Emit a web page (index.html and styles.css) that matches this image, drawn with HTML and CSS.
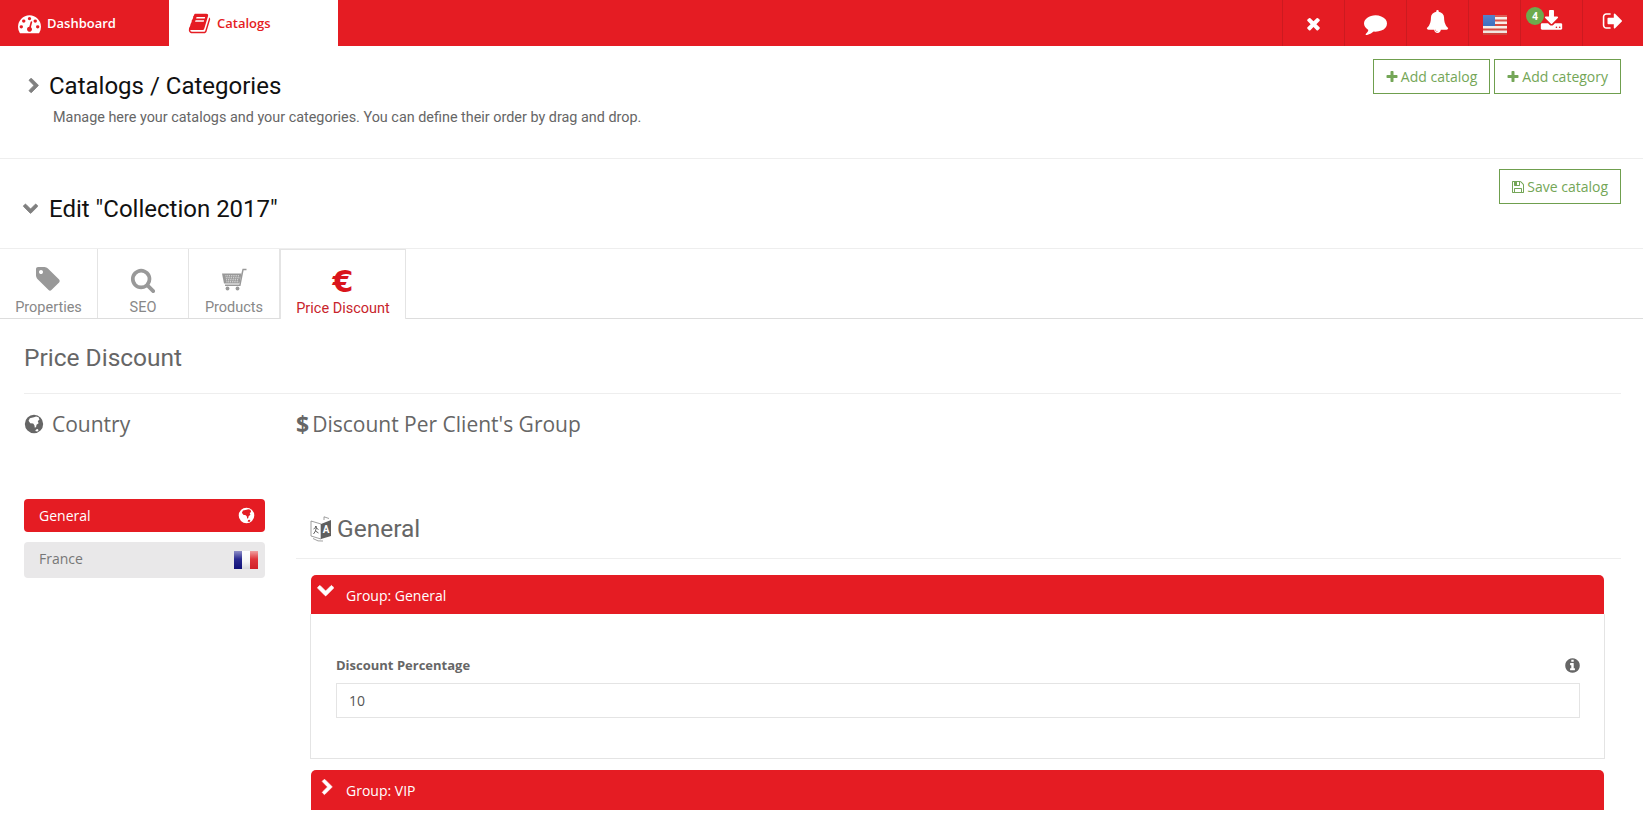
FILE: index.html

```html
<!DOCTYPE html>
<html>
<head>
  <meta charset="UTF-8">
  <title>Catalogs / Categories</title>
  <meta name="viewport" content="width=device-width, initial-scale=1.0">
  <link rel="stylesheet" href="styles.css">
</head>
<body>
  <svg class="defs" width="0" height="0">
    <symbol id="i-dashboard" viewBox="0 0 1792 1792"><path d="M384 1152q0-53-37.5-90.5t-90.5-37.5-90.5 37.5-37.5 90.5 37.5 90.5 90.5 37.5 90.5-37.5 37.5-90.5zm192-448q0-53-37.5-90.5t-90.5-37.5-90.5 37.5-37.5 90.5 37.5 90.5 90.5 37.5 90.5-37.5 37.5-90.5zm428 481l101-382q6-26-7.5-48.5t-38.5-29.5-48 6.5-30 39.5l-101 382q-60 5-107 43.5t-63 98.5q-20 77 20 146t117 89 146-20 89-117q16-60-6-117t-72-91zm660-33q0-53-37.5-90.5t-90.5-37.5-90.5 37.5-37.5 90.5 37.5 90.5 90.5 37.5 90.5-37.5 37.5-90.5zm-640-640q0-53-37.5-90.5t-90.5-37.5-90.5 37.5-37.5 90.5 37.5 90.5 90.5 37.5 90.5-37.5 37.5-90.5zm448 192q0-53-37.5-90.5t-90.5-37.5-90.5 37.5-37.5 90.5 37.5 90.5 90.5 37.5 90.5-37.5 37.5-90.5zm320 448q0 261-141 483-19 29-54 29h-1402q-35 0-54-29-141-221-141-483 0-182 71-348t191-286 286-191 348-71 348 71 286 191 191 286 71 348z"/></symbol>
    <symbol id="i-book" viewBox="0 0 1792 1792"><path d="M1703 478q40 57 18 129l-275 906q-19 64-76.5 107.5t-122.5 43.5h-923q-77 0-148.5-53.5t-99.5-131.5q-24-67-2-127 0-4 3-27t4-37q1-8-3-21.5t-3-19.5q2-11 8-21t16.5-23.5 16.5-23.5q23-38 45-91.5t30-91.5q3-10 .5-30t-.5-28q3-11 17-28t17-23q21-36 42-92t25-90q1-9-2.5-32t.5-28q4-13 22-30.5t22-22.5q19-26 42.5-84.5t27.5-96.5q1-8-3-25.5t-2-26.5q2-8 9-18t18-23 17-21q8-12 16.5-30.5t15-35 16-36 19.5-32 26.5-23.5 36-11.5 47.5 5.5l-1 3q38-9 51-9h761q74 0 114 56t18 130l-274 906q-36 119-71.5 153.5t-128.5 34.5h-869q-27 0-38 15-11 16-1 43 24 70 144 70h923q29 0 56-15.5t35-41.5l300-987q7-22 5-57 38 15 59 43zm-1064 2q-4 13 2 22.5t20 9.5h608q13 0 25.5-9.5t16.5-22.5l21-64q4-13-2-22.5t-20-9.5h-608q-13 0-25.5 9.5t-16.5 22.5zm-83 256q-4 13 2 22.5t20 9.5h608q13 0 25.5-9.5t16.5-22.5l21-64q4-13-2-22.5t-20-9.5h-608q-13 0-25.5 9.5t-16.5 22.5z"/></symbol>
    <symbol id="i-right" viewBox="0 0 1792 1792"><path d="M1363 877l-742 742q-19 19-45 19t-45-19l-166-166q-19-19-19-45t19-45l531-531-531-531q-19-19-19-45t19-45l166-166q19-19 45-19t45 19l742 742q19 19 19 45t-19 45z"/></symbol>
    <symbol id="i-down" viewBox="0 0 1792 1792"><path transform="rotate(90 896 896)" d="M1363 877l-742 742q-19 19-45 19t-45-19l-166-166q-19-19-19-45t19-45l531-531-531-531q-19-19-19-45t19-45l166-166q19-19 45-19t45 19l742 742q19 19 19 45t-19 45z"/></symbol>
    <symbol id="i-times" viewBox="0 0 1792 1792"><path d="M1490 1322q0 40-28 68l-136 136q-28 28-68 28t-68-28l-294-294-294 294q-28 28-68 28t-68-28l-136-136q-28-28-28-68t28-68l294-294-294-294q-28-28-28-68t28-68l136-136q28-28 68-28t68 28l294 294 294-294q28-28 68-28t68 28l136 136q28 28 28 68t-28 68l-294 294 294 294q28 28 28 68z"/></symbol>
    <symbol id="i-comment" viewBox="0 0 1792 1792"><path d="M1792 896q0 174-120 321.5t-326 233-450 85.5q-70 0-145-8-198 175-460 242-49 14-114 22-17 2-30.5-9t-17.5-29v-1q-3-4-.5-12t2-10 4.5-9.5l6-9 7-8.5 8-9q7-8 31-34.5t34.5-38 31-39.5 32.5-51 27-59 26-76q-157-89-247.5-220t-90.5-281q0-130 71-248.5t191-204.5 286-136.5 348-50.5q244 0 450 85.5t326 233 120 321.5z"/></symbol>
    <symbol id="i-bell" viewBox="0 0 1792 1792"><path d="M912 1696q0-16-16-16-59 0-101.5-42.5t-42.5-101.5q0-16-16-16t-16 16q0 73 51.5 124.5t124.5 51.5q16 0 16-16zm816-288q0 52-38 90t-90 38h-448q0 106-75 181t-181 75-181-75-75-181h-448q-52 0-90-38t-38-90q50-42 91-88t85-119.5 74.5-158.5 50-206 19.5-260q0-152 117-282.5t307-158.5q-8-19-8-39 0-40 28-68t68-28 68 28 28 68q0 20-8 39 190 28 307 158.5t117 282.5q0 139 19.5 260t50 206 74.5 158.5 85 119.5 91 88z"/></symbol>
    <symbol id="i-download" viewBox="0 0 1792 1792"><path d="M1344 1344q0-26-19-45t-45-19-45 19-19 45 19 45 45 19 45-19 19-45zm256 0q0-26-19-45t-45-19-45 19-19 45 19 45 45 19 45-19 19-45zm128-224v320q0 40-28 68t-68 28h-1472q-40 0-68-28t-28-68v-320q0-40 28-68t68-28h465l135 136q58 56 136 56t136-56l136-136h464q40 0 68 28t28 68zm-325-569q17 41-14 70l-448 448q-18 19-45 19t-45-19l-448-448q-31-29-14-70 17-39 59-39h256v-448q0-26 19-45t45-19h256q26 0 45 19t19 45v448h256q42 0 59 39z"/></symbol>
    <symbol id="i-signout" viewBox="0 0 1792 1792"><path d="M704 1440q0 4 1 20t.5 26.5-3 23.5-10 19.5-20.5 6.5h-320q-119 0-203.5-84.5t-84.5-203.5v-704q0-119 84.5-203.5t203.5-84.5h320q13 0 22.5 9.5t9.5 22.5q0 4 1 20t.5 26.5-3 23.5-10 19.5-20.5 6.5h-320q-66 0-113 47t-47 113v704q0 66 47 113t113 47h312l11.5 1 11.5 3 8 5.5 7 9 2 13.5zm928-544q0 26-19 45l-544 544q-19 19-45 19t-45-19-19-45v-288h-448q-26 0-45-19t-19-45v-384q0-26 19-45t45-19h448v-288q0-26 19-45t45-19 45 19l544 544q19 19 19 45z"/></symbol>
    <symbol id="i-plus" viewBox="0 0 1792 1792"><path d="M1600 736v192q0 40-28 68t-68 28h-416v416q0 40-28 68t-68 28h-192q-40 0-68-28t-28-68v-416h-416q-40 0-68-28t-28-68v-192q0-40 28-68t68-28h416v-416q0-40 28-68t68-28h192q40 0 68 28t28 68v416h416q40 0 68 28t28 68z"/></symbol>
    <symbol id="i-save" viewBox="0 0 1792 1792"><path d="M512 1536h768v-384h-768v384zm896 0h128v-896q0-14-10-38.5t-20-34.5l-281-281q-10-10-34-20t-39-10v416q0 40-28 68t-68 28h-576q-40 0-68-28t-28-68v-416h-128v1280h128v-416q0-40 28-68t68-28h832q40 0 68 28t28 68v416zm-384-928v-320q0-13-9.5-22.5t-22.5-9.5h-192q-13 0-22.5 9.5t-9.5 22.5v320q0 13 9.5 22.5t22.5 9.5h192q13 0 22.5-9.5t9.5-22.5zm640 32v928q0 40-28 68t-68 28h-1344q-40 0-68-28t-28-68v-1344q0-40 28-68t68-28h928q40 0 88 20t76 48l280 280q28 28 48 76t20 88z"/></symbol>
    <symbol id="i-tag" viewBox="0 0 1792 1792"><path d="M576 448q0-53-37.5-90.5t-90.5-37.5-90.5 37.5-37.5 90.5 37.5 90.5 90.5 37.5 90.5-37.5 37.5-90.5zm1067 576q0 53-37 90l-491 492q-39 37-91 37-53 0-90-37l-715-716q-38-37-64.5-101t-26.5-117v-416q0-52 38-90t90-38h416q53 0 117 26.5t102 64.5l715 714q37 39 37 91z"/></symbol>
    <symbol id="i-search" viewBox="0 0 1792 1792"><path d="M1216 832q0-185-131.5-316.5t-316.5-131.5-316.5 131.5-131.5 316.5 131.5 316.5 316.5 131.5 316.5-131.5 131.5-316.5zm512 832q0 52-38 90t-90 38q-54 0-90-38l-343-342q-179 124-399 124-143 0-273.5-55.5t-225-150-150-225-55.5-273.5 55.5-273.5 150-225 225-150 273.5-55.5 273.5 55.5 225 150 150 225 55.5 273.5q0 220-124 399l343 343q37 37 37 90z"/></symbol>
    <symbol id="i-info" viewBox="0 0 1792 1792"><path d="M1152 1376v-160q0-14-9-23t-23-9h-96v-512q0-14-9-23t-23-9h-320q-14 0-23 9t-9 23v160q0 14 9 23t23 9h96v320h-96q-14 0-23 9t-9 23v160q0 14 9 23t23 9h448q14 0 23-9t9-23zm-128-896v-160q0-14-9-23t-23-9h-192q-14 0-23 9t-9 23v160q0 14 9 23t23 9h192q14 0 23-9t9-23zm640 416q0 209-103 385.5t-279.5 279.5-385.5 103-385.5-103-279.5-279.5-103-385.5 103-385.5 279.5-279.5 385.5-103 385.5 103 279.5 279.5 103 385.5z"/></symbol>
    <symbol id="i-globe" viewBox="0 0 24 24"><path fill-rule="evenodd" d="M12 1a11 11 0 1 1 0 22 11 11 0 0 1 0-22zM7 5 5.500 8l2 3 3.500.5 1.500 2 .5 3 1.500-1 .5-2.500 2.500-2-1-2.500 2-1.500-1-3-3-1-2.500 1zM14.500 18.500l-1 2 2.500.5 1.500-1.500-1-1.500z"/></symbol>
  </svg>

  <header class="topbar">
    <a class="main-tab">
      <svg class="main-tab-icon"><use href="#i-dashboard"/></svg>Dashboard
    </a>
    <a class="main-tab active">
      <svg class="main-tab-icon"><use href="#i-book"/></svg>Catalogs
    </a>
    <div class="top-actions">
      <a class="top-action"><svg class="ic-x"><use href="#i-times"/></svg></a>
      <a class="top-action"><svg class="ic-top"><use href="#i-comment"/></svg></a>
      <a class="top-action"><svg class="ic-top raised"><use href="#i-bell"/></svg></a>
      <a class="top-action narrow">
        <svg class="flag-us" viewBox="0 0 24 20">
          <defs>
            <linearGradient id="gloss" x1="0" y1="0" x2="0" y2="1">
              <stop offset="0" stop-color="#fff" stop-opacity=".12"/>
              <stop offset=".5" stop-color="#fff" stop-opacity="0"/>
              <stop offset="1" stop-color="#000" stop-opacity=".06"/>
            </linearGradient>
          </defs>
          <rect width="24" height="20" fill="#f8efe9"/>
          <rect y="0" width="24" height="2" fill="#d9483f"/>
          <rect y="4.500" width="24" height="2" fill="#d9483f"/>
          <rect y="9" width="24" height="2" fill="#d9483f"/>
          <rect y="13.500" width="24" height="2" fill="#d9483f"/>
          <rect y="18" width="24" height="2" fill="#d9483f"/>
          <rect width="12" height="11" fill="#4070c0"/>
          <rect width="24" height="20" fill="url(#gloss)"/>
        </svg>
      </a>
      <a class="top-action">
        <span class="badge">4</span>
        <svg class="ic-top raised"><use href="#i-download"/></svg>
      </a>
      <a class="top-action last"><svg class="ic-top raised small"><use href="#i-signout"/></svg></a>
    </div>
  </header>

  <section class="head-block first">
    <div class="head-text">
      <h1 class="head-title"><svg class="head-arrow"><use href="#i-right"/></svg>Catalogs / Categories</h1>
      <p class="head-sub">Manage here your catalogs and your categories. You can define their order by drag and drop.</p>
    </div>
    <div class="head-buttons">
      <a class="btn-outline"><svg class="btn-icon"><use href="#i-plus"/></svg>Add catalog</a>
      <a class="btn-outline"><svg class="btn-icon"><use href="#i-plus"/></svg>Add category</a>
    </div>
  </section>

  <section class="head-block second">
    <h1 class="head-title"><svg class="head-arrow"><use href="#i-down"/></svg>Edit "Collection 2017"</h1>
    <div class="head-buttons">
      <a class="btn-outline"><svg class="btn-icon"><use href="#i-save"/></svg>Save catalog</a>
    </div>
  </section>

  <nav class="tabs">
    <a class="tab t1"><svg class="tab-icon tag"><use href="#i-tag"/></svg>Properties</a>
    <a class="tab t2"><svg class="tab-icon search"><use href="#i-search"/></svg>SEO</a>
    <a class="tab t3">
      <svg class="tab-icon cart" viewBox="0 0 26 24">
        <path d="M1 5.500h19.500L18.500 15.500H3z"/>
        <path d="M20.500 5 21.500 .8H25.500v1.400h-2.900L19.500 18H4v-1.400h14.300z"/>
        <circle cx="6.500" cy="20.500" r="1.900"/><circle cx="16.500" cy="20.500" r="1.900"/>
        <path class="cart-grid" d="M4.500 7.800h14M4.800 9.800h13.500M5.200 11.800h12.700M5.500 13.800h12"/>
      </svg>Products
    </a>
    <a class="tab t4 active"><span class="euro">€</span>Price Discount</a>
  </nav>

  <main class="content">
    <h2 class="section-title">Price Discount</h2>
    <div class="columns-head">
      <h3 class="col-title country"><svg class="globe-big"><use href="#i-globe"/></svg>Country</h3>
      <h3 class="col-title"><span class="dollar">$</span>Discount Per Client's Group</h3>
    </div>
    <div class="columns">
      <aside class="countries">
        <a class="country-item active">General<svg class="globe-small"><use href="#i-globe"/></svg></a>
        <a class="country-item">France
          <svg class="flag-fr" viewBox="0 0 24 18">
            <defs>
              <linearGradient id="fr-blue" x1="0" y1="0" x2="0" y2="1"><stop offset="0" stop-color="#8f8fc8"/><stop offset=".45" stop-color="#2a2a90"/><stop offset="1" stop-color="#101078"/></linearGradient>
              <linearGradient id="fr-white" x1="0" y1="0" x2="0" y2="1"><stop offset="0" stop-color="#fff"/><stop offset=".6" stop-color="#f6f6f6"/><stop offset="1" stop-color="#d8d8dc"/></linearGradient>
              <linearGradient id="fr-red" x1="0" y1="0" x2="0" y2="1"><stop offset="0" stop-color="#f0a0a0"/><stop offset=".45" stop-color="#e0343a"/><stop offset="1" stop-color="#d02028"/></linearGradient>
            </defs>
            <rect width="8" height="18" fill="url(#fr-blue)"/>
            <rect x="8" width="8" height="18" fill="url(#fr-white)"/>
            <rect x="16" width="8" height="18" fill="url(#fr-red)"/>
          </svg>
        </a>
      </aside>
      <div class="groups">
        <div class="lang-head">
          <svg class="lang-icon" viewBox="0 0 22 26">
            <path class="lang-back" d="M1 5 11 8v15L1 20z"/>
            <path class="lang-front" d="M11 8 21 4v16l-10 3z"/>
            <path class="lang-back" d="M14 4V.8l5 1.700M3 22.500q5 3.500 10 2.500"/>
            <path class="lang-run" d="M5 10.500h1.500M6.500 10.500 5.500 15M3.500 13l2-1.500 3 2M5.500 15l-2 3M5.500 15l3 2"/>
            <text class="lang-a" x="16" y="17" text-anchor="middle">A</text>
          </svg>General
        </div>
        <div class="group">
          <div class="group-bar"><svg class="group-arrow"><use href="#i-down"/></svg>Group: General</div>
          <div class="group-body">
            <div class="field-head">
              <label class="field-label">Discount Percentage</label>
              <svg class="info"><use href="#i-info"/></svg>
            </div>
            <input class="field-input" type="text" value="10">
          </div>
        </div>
        <div class="group">
          <div class="group-bar"><svg class="group-arrow closed"><use href="#i-right"/></svg>Group: VIP</div>
        </div>
      </div>
    </div>
  </main>
</body>
</html>
```

FILE: styles.css

```css
html, body {
  height: 838px;
  overflow: hidden;
}
body {
  margin: 0;
  font-family: "Open Sans", sans-serif;
  font-size: 14px;
  color: #666;
  background-color: #fff;
}
svg {
  fill: currentColor;
  display: block;
  flex: none;
}
.defs {
  position: absolute;
}
a {
  text-decoration: none;
}

.topbar {
  display: flex;
  height: 46px;
  background-color: #e51c23;
}
.main-tab {
  width: 169px;
  box-sizing: border-box;
  padding-left: 18px;
  display: flex;
  align-items: center;
  color: #fff;
  font-size: 13px;
  font-weight: 600;
}
.main-tab.active {
  background-color: #fff;
  color: #e51c23;
  padding-left: 19px;
}
.main-tab-icon {
  width: 23px;
  height: 23px;
  margin-right: 6px;
}
.top-actions {
  margin-left: auto;
  display: flex;
  color: #fff;
}
.top-action {
  position: relative;
  width: 62px;
  border-left: 1px solid #cc1a20;
  box-sizing: border-box;
  display: flex;
  align-items: center;
  justify-content: center;
}
.top-action.narrow {
  width: 52px;
}
.top-action.last {
  width: 61px;
}
.ic-x {
  width: 19px;
  height: 19px;
}
.ic-top {
  width: 23px;
  height: 23px;
}
.ic-top.raised {
  margin-bottom: 4px;
}
.ic-top.small {
  width: 22px;
  height: 22px;
}
.flag-us {
  width: 24px;
  height: 20px;
  margin-top: 4px;
}
.badge {
  position: absolute;
  left: 5px;
  top: 7px;
  width: 18px;
  height: 18px;
  border-radius: 50%;
  background-color: #6cab4d;
  color: #fff;
  font-size: 10px;
  font-weight: 700;
  line-height: 18px;
  text-align: center;
}

.head-block {
  display: flex;
  justify-content: space-between;
  border-bottom: 1px solid #eee;
  padding-right: 22px;
}
.head-block.first {
  height: 112px;
}
.head-block.second {
  height: 89px;
}
.head-text {
  padding-top: 25px;
}
.head-title {
  margin: 0;
  display: flex;
  align-items: center;
  padding-left: 26px;
  font-family: Roboto, sans-serif;
  font-size: 24px;
  font-weight: 400;
  line-height: 30px;
  color: #111;
}
.second .head-title {
  align-self: flex-start;
  margin-top: 35px;
  padding-left: 22px;
}
.head-arrow {
  width: 16px;
  height: 16px;
  margin-right: 7px;
  color: #808080;
  stroke: currentColor;
  stroke-width: 90;
}
.second .head-arrow {
  margin-right: 11px;
}
.head-sub {
  margin: 7px 0 0 53px;
  font-family: Roboto, sans-serif;
  font-size: 14.4px;
  line-height: 20px;
  color: #666;
}
.head-buttons {
  display: flex;
  gap: 4px;
  padding-top: 13px;
  align-items: flex-start;
}
.second .head-buttons {
  padding-top: 10px;
}
.btn-outline {
  display: flex;
  align-items: center;
  height: 35px;
  box-sizing: border-box;
  padding: 0 12px 0 11px;
  border: 1px solid #6f9f4e;
  color: #74a657;
  font-size: 14px;
}
.btn-icon {
  width: 14px;
  height: 14px;
  margin-right: 2px;
}

.tabs {
  display: flex;
  height: 70px;
  box-sizing: border-box;
  border-bottom: 1px solid #ddd;
}
.tab {
  display: flex;
  flex-direction: column;
  align-items: center;
  box-sizing: border-box;
  height: 69px;
  padding-top: 17px;
  border-right: 1px solid #e4e4e4;
  font-family: Roboto, sans-serif;
  font-size: 14.5px;
  line-height: 18px;
  color: #888;
}
.t1 { width: 98px; }
.t2 { width: 91px; }
.t3 { width: 91px; }
.t4 {
  width: 126px;
  height: 70px;
  background-color: #fff;
  border-top: 1px solid #e4e4e4;
  border-left: 1px solid #e4e4e4;
  margin-bottom: -1px;
}
.tab-icon {
  width: 28px;
  height: 28px;
  margin-bottom: 5px;
  color: #999;
}
.tab-icon.tag {
  margin: -1px 2px 6px 0;
}
.tab-icon.search {
  width: 26px;
  height: 26px;
  margin: 1px 0 6px;
}
.tab-icon.cart {
  width: 26px;
  height: 24px;
  margin: 2px 0 7px;
}
.cart-grid {
  fill: none;
  stroke: #fff;
  stroke-width: .9;
  stroke-dasharray: .9 .9;
}
.euro {
  font-family: "DejaVu Sans", sans-serif;
  font-size: 30px;
  font-weight: 700;
  line-height: 30px;
  margin-bottom: 3px;
  color: #d9151c;
}
.tab.active {
  color: #c8242b;
}

.content {
  padding: 0 22px 0 24px;
}
.section-title {
  margin: 0;
  height: 75px;
  box-sizing: border-box;
  padding-top: 24px;
  border-bottom: 1px solid #eee;
  font-family: Roboto, sans-serif;
  font-size: 24.5px;
  font-weight: 400;
  line-height: 30px;
  color: #666;
}
.columns-head {
  display: flex;
  padding-top: 15px;
  height: 105px;
  box-sizing: border-box;
}
.col-title {
  margin: 0;
  display: flex;
  align-items: center;
  height: 30px;
  font-size: 21px;
  font-weight: 400;
  color: #666;
}
.col-title.country {
  width: 272px;
}
.globe-big {
  width: 20px;
  height: 20px;
  margin-right: 8px;
}
.dollar {
  font-weight: 700;
  font-size: 23px;
  margin-right: 3px;
}
.columns {
  display: flex;
}
.countries {
  width: 241px;
  margin-right: 31px;
}
.country-item {
  display: flex;
  align-items: center;
  justify-content: space-between;
  height: 36px;
  box-sizing: border-box;
  padding: 0 7px 3px 15px;
  margin-bottom: 10px;
  border-radius: 4px;
  background-color: #e9e8e9;
  color: #777;
}
.country-item.active {
  height: 33px;
  padding: 0 10px 0 15px;
  background-color: #e51c23;
  color: #fff;
}
.globe-small {
  width: 17px;
  height: 17px;
}
.flag-fr {
  width: 24px;
  height: 18px;
  margin-top: 3px;
}
.groups {
  flex: 1;
}
.lang-head {
  display: flex;
  align-items: center;
  height: 59px;
  padding-left: 14px;
  border-bottom: 1px solid #eee;
  font-family: Roboto, sans-serif;
  font-size: 24.5px;
  color: #666;
}
.lang-icon {
  width: 22px;
  height: 26px;
  margin-right: 5px;
}
.lang-back {
  fill: none;
  stroke: #777;
  stroke-width: .7;
}
.lang-run {
  fill: none;
  stroke: #555;
  stroke-width: .9;
}
.lang-front {
  fill: #5f5f5f;
}
.lang-a {
  fill: #fff;
  font-size: 10px;
  font-weight: 700;
}
.group {
  margin: 16px 16px 0 14px;
}
.group + .group {
  margin-top: 11px;
}
.group-bar {
  display: flex;
  align-items: center;
  height: 39px;
  box-sizing: border-box;
  margin: 0 1px;
  padding: 2px 0 0 35px;
  position: relative;
  border-radius: 5px 5px 0 0;
  background-color: #e51c23;
  color: #fff;
}
.group + .group .group-bar {
  height: 40px;
  padding: 0 0 0 35px;
}
.group-arrow {
  position: absolute;
  left: 5px;
  top: 7px;
  width: 18px;
  height: 18px;
  stroke: currentColor;
  stroke-width: 60;
}
.group-arrow.closed {
  left: 8px;
  top: 9px;
  width: 17px;
  height: 17px;
}
.group-body {
  height: 145px;
  box-sizing: border-box;
  padding: 41px 24px 0 25px;
  border: 1px solid #e4e4e4;
  border-top: 0;
}
.field-head {
  display: flex;
  align-items: center;
  justify-content: space-between;
  height: 20px;
  margin-bottom: 8px;
}
.field-label {
  font-size: 13px;
  font-weight: 700;
  color: #666;
}
.info {
  width: 17px;
  height: 17px;
  margin-right: -1px;
}
.field-input {
  display: block;
  width: 100%;
  height: 35px;
  box-sizing: border-box;
  padding: 0 12px;
  border: 1px solid #e4e4e4;
  font-family: "Open Sans", sans-serif;
  font-size: 14px;
  color: #555;
}
```
